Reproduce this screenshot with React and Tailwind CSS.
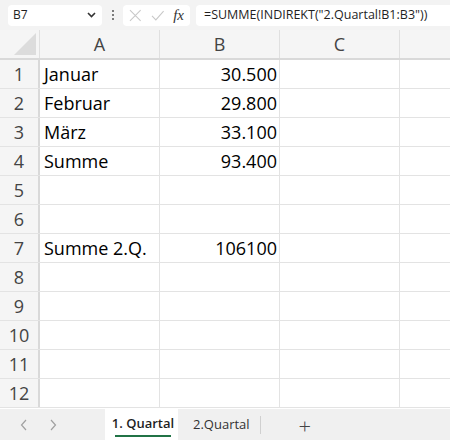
import React from "react";

const rows = [
  ["Januar", "30.500"],
  ["Februar", "29.800"],
  ["März", "33.100"],
  ["Summe", "93.400"],
  ["", ""],
  ["", ""],
  ["Summe 2.Q.", "106100"],
  ["", ""],
  ["", ""],
  ["", ""],
  ["", ""],
  ["", ""],
];

const cellFont = { fontFamily: "'Open Sans', 'Liberation Sans', sans-serif" };

export default function App() {
  return (
    <div className="w-[450px] h-[440px] overflow-hidden bg-[#f3f3f3] flex flex-col text-[#1f1f1f]" style={cellFont}>
      {/* formula bar */}
      <div className="h-[30px] flex items-center pl-[8px] gap-0 shrink-0">
        <div className="w-[94px] h-[21px] bg-white rounded-[4px] flex items-center justify-between pl-[5px] pr-[6px] text-[12px]">
          <span>B7</span>
          <svg width="9" height="6" viewBox="0 0 9 6"><path d="M1 1l3.5 3.5L8 1" fill="none" stroke="#333" strokeWidth="1.6" /></svg>
        </div>
        <div className="w-[21px] flex flex-col items-center gap-[2px]">
          <span className="w-[2px] h-[2px] bg-[#555] rounded-full" />
          <span className="w-[2px] h-[2px] bg-[#555] rounded-full" />
          <span className="w-[2px] h-[2px] bg-[#555] rounded-full" />
        </div>
        <div className="w-[67px] h-[21px] bg-white rounded-[4px] flex items-center px-[6px] gap-[9px]">
          <svg width="13" height="13" viewBox="0 0 13 13"><path d="M1 1l11 11M12 1L1 12" stroke="#c8c8c8" strokeWidth="1.1" /></svg>
          <svg width="14" height="11" viewBox="0 0 14 11"><path d="M1 6l4 4 8-9" fill="none" stroke="#c8c8c8" strokeWidth="1.1" /></svg>
          <span className="text-[15px] italic text-[#333] leading-none" style={{ fontFamily: "'Liberation Serif', serif" }}>fx</span>
        </div>
        <div className="ml-[6px] flex-1 h-[21px] bg-white rounded-l-[4px] flex items-center pl-[8px] text-[12.5px] whitespace-nowrap">
          =SUMME(INDIREKT("2.Quartal!B1:B3"))
        </div>
      </div>

      {/* grid */}
      <div className="flex-1 bg-white flex flex-col overflow-hidden">
        <div className="h-[30px] flex bg-[#f5f5f5] border-b-2 border-[#d9d9d9] shrink-0">
          <div className="w-[40px] border-r border-[#e0e0e0] flex items-end justify-end pb-[3px] pr-[3px]">
            <svg width="22" height="22" viewBox="0 0 22 22"><path d="M22 0V22H0Z" fill="#dcdcdc" /></svg>
          </div>
          {["A", "B", "C"].map((c) => (
            <div key={c} className="w-[120px] border-r border-[#e0e0e0] flex items-center justify-center text-[18px] text-[#444]">
              {c}
            </div>
          ))}
          <div className="flex-1" />
        </div>
        {rows.map(([a, b], i) => (
          <div key={i} className="h-[29px] flex border-b border-[#e3e3e3] shrink-0">
            <div className="w-[40px] bg-[#f5f5f5] border-r-2 border-[#d9d9d9] flex items-center justify-center text-[18px] text-[#444]">
              {i + 1}
            </div>
            <div className="w-[120px] border-r border-[#e3e3e3] flex items-center pl-[4px] text-[18px] text-black whitespace-nowrap">
              {a}
            </div>
            <div className="w-[120px] border-r border-[#e3e3e3] flex items-center justify-end pr-[2px] text-[18px] text-black">
              {b}
            </div>
            <div className="w-[120px] border-r border-[#e3e3e3]" />
            <div className="flex-1" />
          </div>
        ))}
      </div>

      {/* sheet tabs */}
      <div className="h-[31px] shrink-0 bg-[#f0f0f0] flex items-center text-[13px]">
        <div className="w-[105px] flex items-center pl-[20px] gap-[21px]">
          <svg width="8" height="12" viewBox="0 0 8 12"><path d="M6 1L1.5 6 6 11" fill="none" stroke="#a0a0a0" strokeWidth="1.2" /></svg>
          <svg width="8" height="12" viewBox="0 0 8 12"><path d="M2 1l4.5 5L2 11" fill="none" stroke="#a0a0a0" strokeWidth="1.2" /></svg>
        </div>
        <div className="h-full w-[73px] bg-white flex flex-col items-center justify-center pt-[2px] pl-[3px]">
          <span className="font-semibold text-[#1f1f1f]">1. Quartal</span>
          <span className="w-[56px] h-[2px] bg-[#217346] mt-[1px]" />
        </div>
        <div className="pl-[15px] pr-[10px] text-[#333]">2.Quartal</div>
        <div className="w-px h-[18px] bg-[#d0d0d0]" />
        <div className="ml-[38px] text-[22px] font-light text-[#444] leading-none">+</div>
      </div>
    </div>
  );
}
